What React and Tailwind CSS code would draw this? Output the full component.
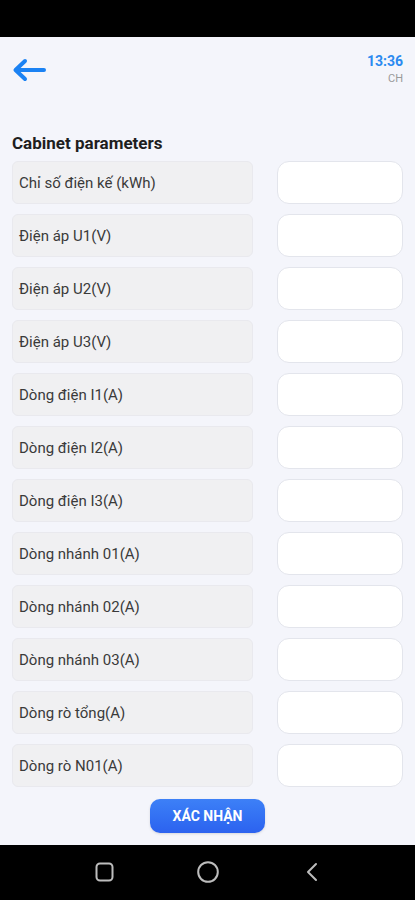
import React from 'react';

const FIELDS = [
  'Chỉ số điện kế (kWh)',
  'Điện áp U1(V)',
  'Điện áp U2(V)',
  'Điện áp U3(V)',
  'Dòng điện I1(A)',
  'Dòng điện I2(A)',
  'Dòng điện I3(A)',
  'Dòng nhánh 01(A)',
  'Dòng nhánh 02(A)',
  'Dòng nhánh 03(A)',
  'Dòng rò tổng(A)',
  'Dòng rò N01(A)',
];

export default function App() {
  return (
    <div className="w-[415px] min-h-[900px] flex flex-col bg-[#f4f5fb] font-['Roboto','Liberation_Sans',sans-serif]">
      {/* status bar */}
      <div className="h-[37px] bg-black" />

      {/* header */}
      <div className="h-[96px] flex justify-between px-3">
        <button className="mt-[21px] h-[24px] w-[34px] flex items-center">
          <svg width="34" height="24" viewBox="0 0 34 24" fill="none">
            <path d="M32 12H4M13 3L3.5 12L13 21" stroke="#1b82f3" strokeWidth="4" strokeLinecap="round" strokeLinejoin="round" />
          </svg>
        </button>
        <div className="mt-[16px] flex flex-col items-end">
          <span className="text-[14px] leading-4 font-bold text-[#2b8af0]">13:36</span>
          <span className="text-[11px] leading-4 mt-[2px] text-[#9a9a9a]">CH</span>
        </div>
      </div>

      {/* form */}
      <div className="px-3">
        <h2 className="text-[17px] leading-5 font-bold text-[#1e1e1e] mb-2">Cabinet parameters</h2>
        <div className="flex flex-col gap-[10px]">
          {FIELDS.map((label) => (
            <div key={label} className="flex gap-6">
              <div className="w-[241px] h-[43px] rounded-md bg-[#f0f0f2] border border-[#e9e9ee] flex items-center px-[6px] pt-[1px] text-[15px] text-[#3a3a3a]">
                {label}
              </div>
              <input className="w-[126px] h-[43px] rounded-xl bg-white border border-[#e3e5ec] outline-none px-2 text-[15px]" />
            </div>
          ))}
        </div>
      </div>

      <div className="flex justify-center mt-3 mb-3">
        <button className="w-[115px] h-[34px] rounded-[10px] bg-gradient-to-b from-[#3d80f7] to-[#2c62ef] text-white text-[14px] font-bold shadow-sm">
          XÁC NHẬN
        </button>
      </div>

      {/* nav bar */}
      <div className="h-[55px] bg-black flex items-center pl-[95px] pb-[2px]">
        <svg width="20" height="20" viewBox="0 0 20 20" fill="none">
          <rect x="1.5" y="1.5" width="16" height="17" rx="3.5" stroke="#bdbdbd" strokeWidth="2" />
        </svg>
        <svg className="ml-[82px]" width="22" height="22" viewBox="0 0 22 22" fill="none">
          <circle cx="11" cy="11" r="9.8" stroke="#bdbdbd" strokeWidth="2" />
        </svg>
        <svg className="ml-[86px]" width="14" height="20" viewBox="0 0 14 20" fill="none">
          <path d="M11 2L3 10L11 18" stroke="#bdbdbd" strokeWidth="2" strokeLinecap="round" strokeLinejoin="round" />
        </svg>
      </div>
    </div>
  );
}
